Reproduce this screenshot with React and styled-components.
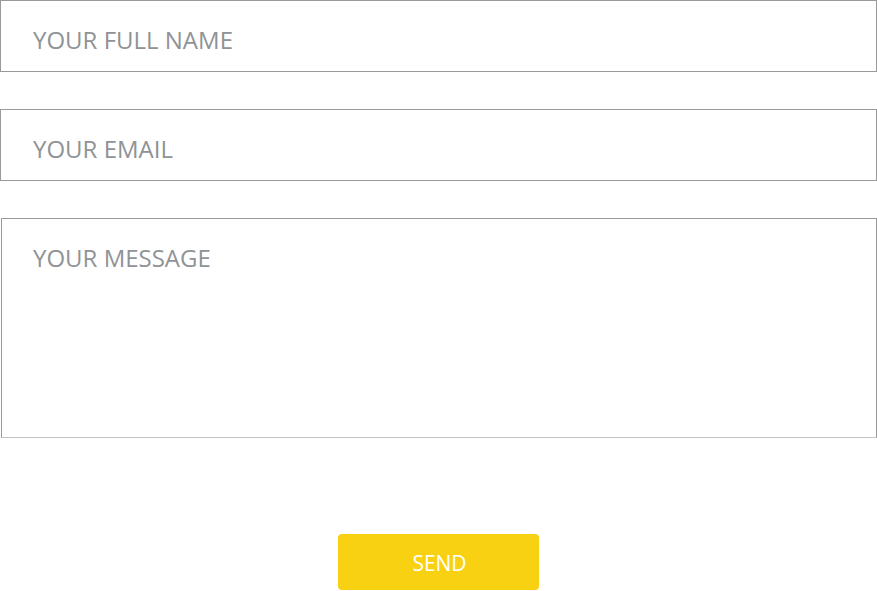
import styled, { createGlobalStyle } from "styled-components";

const GlobalStyle = createGlobalStyle`
  body {
    margin: 0;
    background: #fff;
    font-family: "Open Sans", "Liberation Sans", sans-serif;
  }
`;

const Form = styled.form`
  width: 877px;
  display: flex;
  flex-direction: column;
  gap: 37px;
`;

const fieldStyles = `
  box-sizing: border-box;
  width: 100%;
  border: 1px solid #9a9a9a;
  border-radius: 0;
  background: #fff;
  padding: 0 32px;
  font-family: "Open Sans", "Liberation Sans", sans-serif;
  font-size: 24px;
  color: #555;
  outline: none;

  &::placeholder {
    color: #8f9396;
    opacity: 1;
  }
`;

const Input = styled.input`
  ${fieldStyles}
  height: 72px;
  margin: 0;
  padding-top: 6px;
`;

const Message = styled.textarea`
  ${fieldStyles}
  height: 220px;
  width: 876px;
  margin: 0 0 0 1px;
  padding: 22px 31px 0;
  resize: none;
  border-bottom-color: #c4c4c4;
  display: block;
`;

const Actions = styled.div`
  display: flex;
  justify-content: center;
  padding-top: 59px;
`;

const SendButton = styled.button`
  width: 201px;
  height: 56px;
  border: none;
  border-radius: 4px;
  background: #f9d113;
  color: #fff;
  font-family: "Open Sans", "Liberation Sans", sans-serif;
  font-size: 21px;
  cursor: pointer;
  padding: 1px 0 0 2px;
`;

export default function App() {
  return (
    <>
      <GlobalStyle />
      <Form onSubmit={(e) => e.preventDefault()}>
        <Input type="text" placeholder="YOUR FULL NAME" />
        <Input type="email" placeholder="YOUR EMAIL" />
        <Message placeholder="YOUR MESSAGE" />
        <Actions>
          <SendButton type="submit">SEND</SendButton>
        </Actions>
      </Form>
    </>
  );
}
